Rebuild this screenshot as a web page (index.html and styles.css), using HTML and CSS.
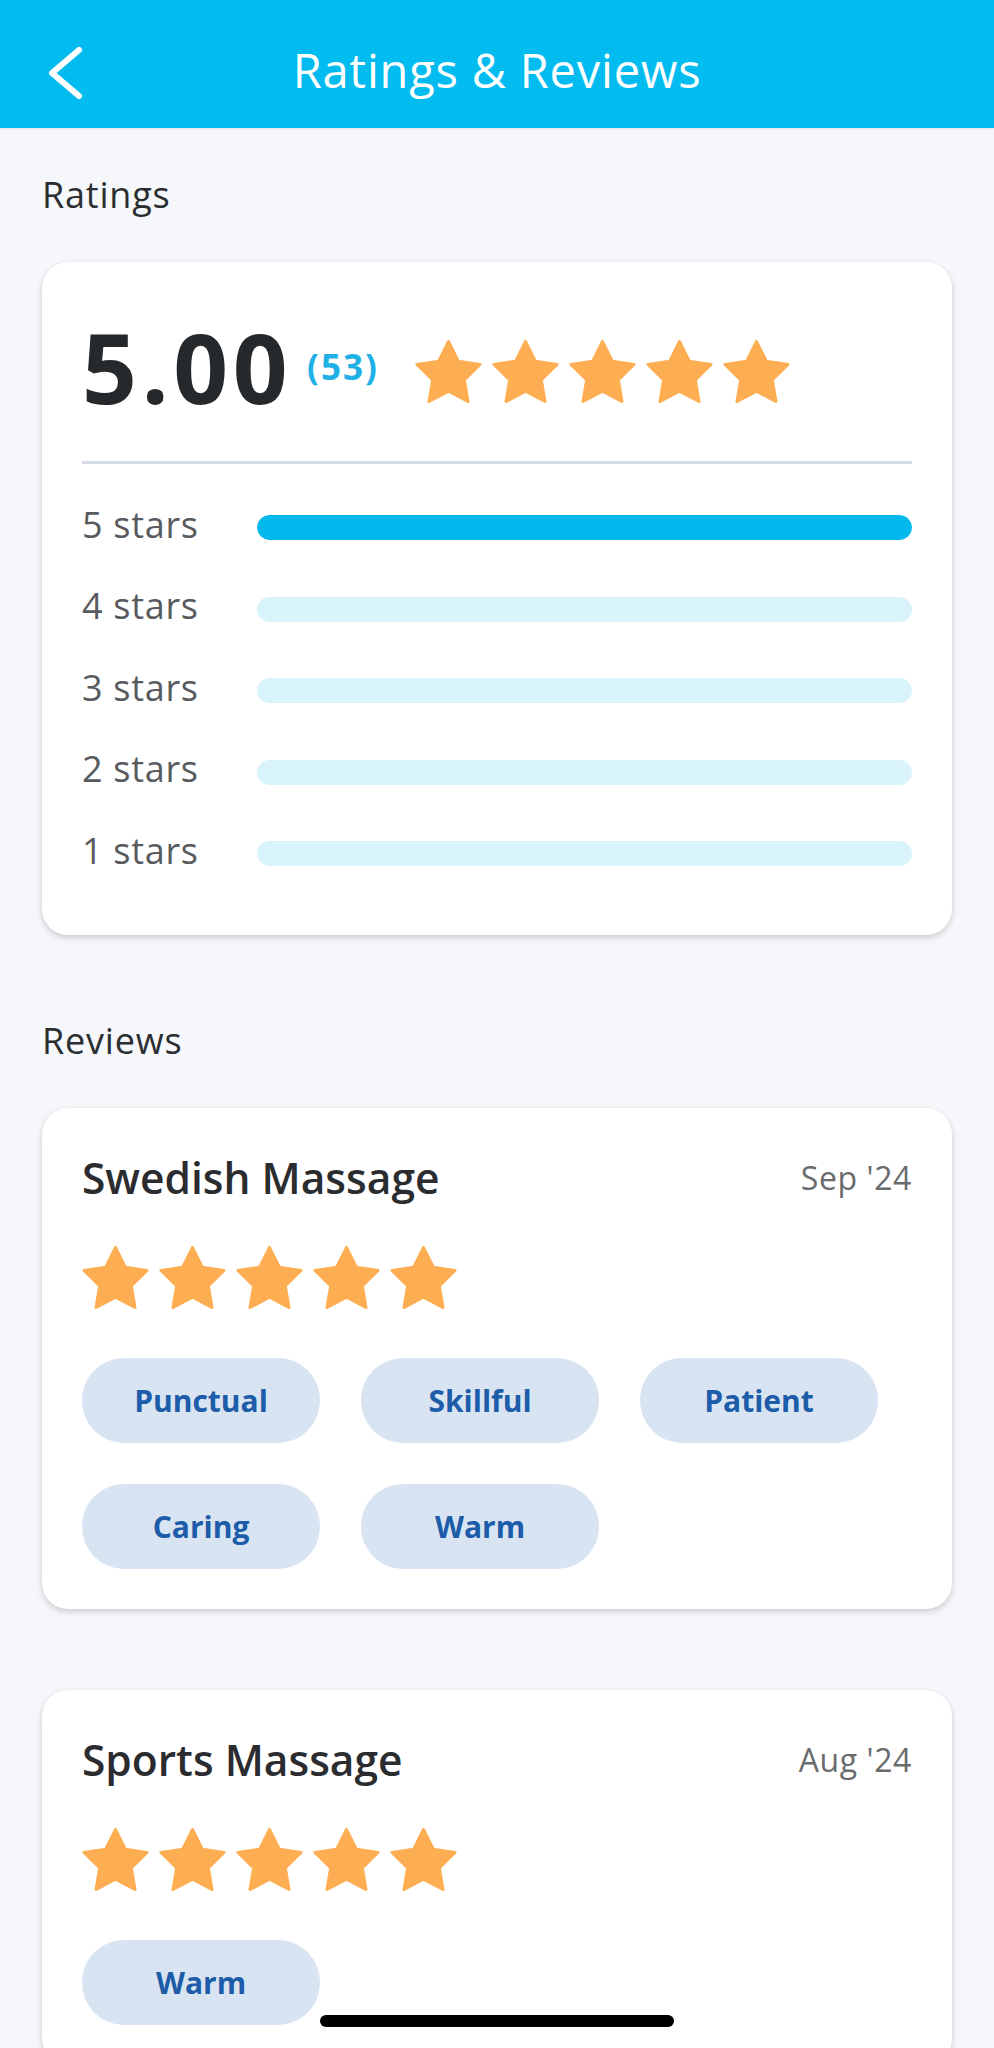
FILE: index.html
```html
<!DOCTYPE html>
<html lang="en">
<head>
<meta charset="utf-8">
<title>Ratings &amp; Reviews</title>
<link rel="stylesheet" href="styles.css">
</head>
<body>
<svg class="defs" width="0" height="0" aria-hidden="true">
  <symbol id="star" viewBox="1.5 1.5 21 20.02">
    <path d="M12 2l3.09 6.26L22 9.27l-5 4.87 1.18 6.88L12 17.77l-6.18 3.25L7 14.14 2 9.27l6.91-1.01L12 2z"/>
  </symbol>
</svg>

<header class="topbar">
  <button class="back" aria-label="Back">
    <svg class="back-icon" viewBox="0 0 40 58" width="40" height="58"><polyline points="33,6 6,29 33,52"/></svg>
  </button>
  <h1 class="topbar-title">Ratings &amp; Reviews</h1>
  <span class="topbar-spacer"></span>
</header>

<main class="content">
  <h2 class="section-title">Ratings</h2>
  <section class="card summary-card">
    <div class="summary">
      <span class="score">5.00</span>
      <span class="count">(53)</span>
      <div class="stars">
        <svg class="star"><use href="#star"/></svg>
        <svg class="star"><use href="#star"/></svg>
        <svg class="star"><use href="#star"/></svg>
        <svg class="star"><use href="#star"/></svg>
        <svg class="star"><use href="#star"/></svg>
      </div>
    </div>
    <div class="divider"></div>
    <div class="breakdown">
      <div class="bd-row"><span class="bd-label">5 stars</span><div class="bar"><div class="bar-fill" style="width:100%"></div></div></div>
      <div class="bd-row"><span class="bd-label">4 stars</span><div class="bar"><div class="bar-fill" style="width:0%"></div></div></div>
      <div class="bd-row"><span class="bd-label">3 stars</span><div class="bar"><div class="bar-fill" style="width:0%"></div></div></div>
      <div class="bd-row"><span class="bd-label">2 stars</span><div class="bar"><div class="bar-fill" style="width:0%"></div></div></div>
      <div class="bd-row"><span class="bd-label">1 stars</span><div class="bar"><div class="bar-fill" style="width:0%"></div></div></div>
    </div>
  </section>

  <h2 class="section-title">Reviews</h2>
  <article class="card review">
    <div class="review-head">
      <h3 class="review-title">Swedish Massage</h3>
      <span class="review-date">Sep '24</span>
    </div>
    <div class="stars">
      <svg class="star"><use href="#star"/></svg>
      <svg class="star"><use href="#star"/></svg>
      <svg class="star"><use href="#star"/></svg>
      <svg class="star"><use href="#star"/></svg>
      <svg class="star"><use href="#star"/></svg>
    </div>
    <div class="tags">
      <span class="tag">Punctual</span>
      <span class="tag">Skillful</span>
      <span class="tag">Patient</span>
      <span class="tag">Caring</span>
      <span class="tag">Warm</span>
    </div>
  </article>

  <article class="card review">
    <div class="review-head">
      <h3 class="review-title">Sports Massage</h3>
      <span class="review-date">Aug '24</span>
    </div>
    <div class="stars">
      <svg class="star"><use href="#star"/></svg>
      <svg class="star"><use href="#star"/></svg>
      <svg class="star"><use href="#star"/></svg>
      <svg class="star"><use href="#star"/></svg>
      <svg class="star"><use href="#star"/></svg>
    </div>
    <div class="tags">
      <span class="tag">Warm</span>
    </div>
  </article>
</main>

<div class="home-indicator"></div>
</body>
</html>
```

FILE: styles.css
```css
* { box-sizing: border-box; }

html, body {
  margin: 0;
  padding: 0;
}

body {
  background: #f5f7fa;
  font-family: "Open Sans", "Noto Sans", sans-serif;
  color: #2a2d30;
}

.defs {
  position: absolute;
  width: 0;
  height: 0;
  overflow: hidden;
}

/* Header */
.topbar {
  height: 128px;
  padding-top: 12px;
  background: #02bbef;
  display: grid;
  grid-template-columns: 1fr auto 1fr;
  align-items: center;
  box-shadow: 0 1px 2px rgba(0, 0, 0, 0.08);
}

.back {
  justify-self: start;
  margin: 6px 0 0 46px;
  padding: 0;
  border: 0;
  background: none;
  display: flex;
}

.back-icon polyline {
  fill: none;
  stroke: #fff;
  stroke-width: 6;
  stroke-linecap: round;
  stroke-linejoin: round;
}

.topbar-title {
  margin: 0;
  font-size: 47px;
  font-weight: 500;
  line-height: 56px;
  letter-spacing: 0.8px;
  color: #fff;
}

/* Content */
.content {
  padding: 45px 42px 0;
}

.section-title {
  margin: 0 0 45px;
  font-size: 36px;
  font-weight: 400;
  line-height: 44px;
  letter-spacing: 0.8px;
  color: #2b2e31;
}

.card {
  background: #fff;
  border-radius: 26px;
  box-shadow: 0 3px 6px rgba(0, 0, 0, 0.16), 0 0 3px rgba(0, 0, 0, 0.05);
}

/* Summary card */
.summary-card {
  padding: 55px 40px 41px;
  margin-bottom: 84px;
}

.summary {
  display: flex;
  align-items: center;
  height: 100px;
}

.score {
  font-size: 96px;
  font-weight: 700;
  line-height: 100px;
  letter-spacing: 4.5px;
  color: #26292c;
}

.count {
  margin-left: 15px;
  font-size: 35px;
  font-weight: 700;
  line-height: 40px;
  letter-spacing: 2px;
  color: #1fb0e5;
}

.stars {
  display: flex;
  gap: 10px;
}

.summary .stars {
  margin-left: 36px;
  padding-top: 8px;
}

.star {
  width: 67px;
  height: 63px;
  fill: #fdae52;
  stroke: #fdae52;
  stroke-width: 1;
  stroke-linejoin: round;
}

.divider {
  height: 3px;
  margin-top: 44px;
  background: #d5dce7;
}

.breakdown {
  margin-top: 22.75px;
  display: grid;
  grid-auto-rows: 81.5px;
}

.bd-row {
  display: flex;
  align-items: center;
}

.bd-label {
  flex: 0 0 175px;
  padding-bottom: 6px;
  font-size: 36px;
  line-height: 44px;
  letter-spacing: 0.7px;
  color: #585a5d;
}

.bar {
  flex: 1;
  height: 25px;
  border-radius: 13px;
  background: #d9f3fb;
  overflow: hidden;
}

.bar-fill {
  height: 100%;
  border-radius: 13px;
  background: #02b9ee;
}

/* Review cards */
.review {
  padding: 44px 40px 40px;
  margin-bottom: 81px;
}

.review-head {
  display: flex;
  justify-content: space-between;
  align-items: center;
  height: 52px;
}

.review-title {
  margin: 0;
  font-size: 42.5px;
  font-weight: 600;
  line-height: 52px;
  color: #2a2c2f;
}

.review-date {
  font-size: 32px;
  line-height: 52px;
  letter-spacing: 0.6px;
  color: #6a6b6d;
}

.review .stars {
  margin-top: 42px;
}

.tags {
  margin-top: 49px;
  display: grid;
  grid-template-columns: repeat(3, 238px);
  gap: 41px;
}

.tag {
  height: 85px;
  border-radius: 42px;
  background: #d9e4f2;
  color: #1c5ca8;
  font-size: 30px;
  font-weight: 700;
  display: flex;
  align-items: center;
  justify-content: center;
}

/* Home indicator overlay */
.home-indicator {
  position: fixed;
  left: 50%;
  bottom: 21px;
  width: 354px;
  height: 12px;
  margin-left: -177px;
  border-radius: 6px;
  background: #000;
}
```
